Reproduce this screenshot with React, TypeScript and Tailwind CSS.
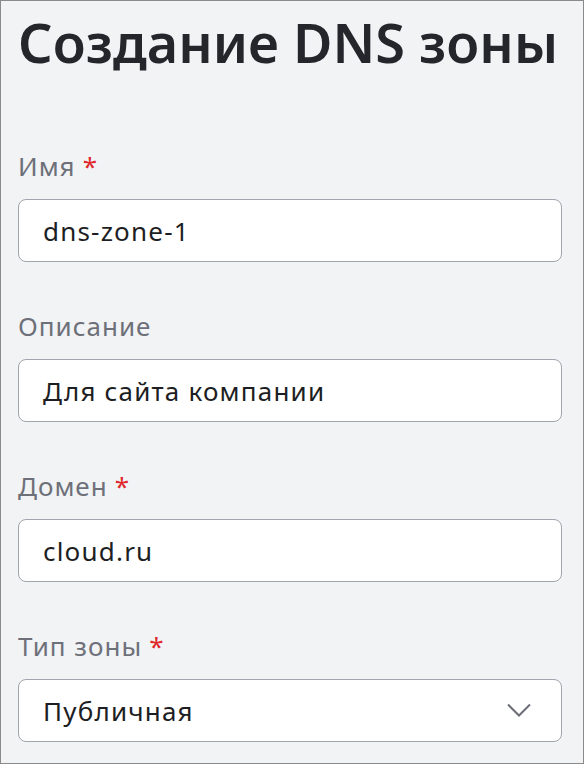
import React from "react";

function Field({
  label,
  required,
  value,
  select,
}: {
  label: string;
  required?: boolean;
  value: string;
  select?: boolean;
}) {
  return (
    <div className="flex flex-col">
      <div className="h-[32px] text-[26px] leading-[32px] tracking-[1px] text-[#6e7079] whitespace-nowrap">
        {label}
        {required && <span className="text-[#e0262b] ml-[7px]">*</span>}
      </div>
      <div className="mt-[17px] h-[63px] w-[544px] rounded-[8px] border border-[#a2a5ad] bg-white flex items-center pl-[24px] pr-[30px]">
        <span className="flex-1 text-[26px] leading-[32px] tracking-[1.2px] text-[#1d1e23] whitespace-nowrap">
          {value}
        </span>
        {select && (
          <svg width="24" height="15" viewBox="0 0 24 15" fill="none">
            <path d="M1 1.5 L12 12.5 L23 1.5" stroke="#6b6e76" strokeWidth="2" />
          </svg>
        )}
      </div>
    </div>
  );
}

export default function App() {
  return (
    <div className="w-[584px] h-[764px] border border-[#8a8a8a] bg-[#f2f3f5] pl-[17px] pt-[8px] overflow-hidden font-['Noto_Sans','Open_Sans',sans-serif]">
      <h1 className="text-[54px] leading-[67px] font-semibold text-[#25262c] whitespace-nowrap">
        Создание DNS зоны
      </h1>
      <div className="mt-[74px] flex flex-col gap-[48px]">
        <Field label="Имя" required value="dns-zone-1" />
        <Field label="Описание" value="Для сайта компании" />
        <Field label="Домен" required value="cloud.ru" />
        <Field label="Тип зоны" required value="Публичная" select />
      </div>
    </div>
  );
}
